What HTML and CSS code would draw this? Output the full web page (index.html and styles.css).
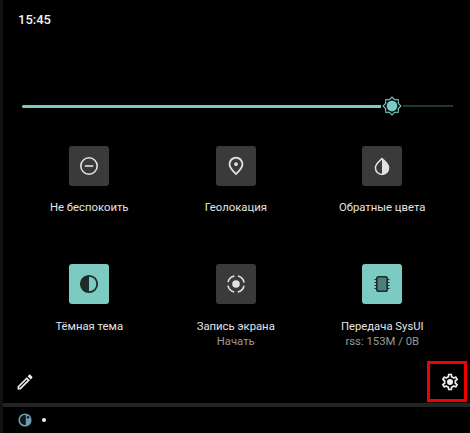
FILE: index.html
```html
<!DOCTYPE html>
<html lang="ru">
<head>
<meta charset="utf-8">
<title>Быстрые настройки</title>
<link rel="stylesheet" href="styles.css">
</head>
<body>
<main class="screen">
  <section class="panel">
    <header class="status"><span class="time">15:45</span></header>
    <div class="slider">
      <div class="track-on"></div>
      <svg class="thumb" width="22" height="22" viewBox="0 0 22 22">
        <rect x="4.8" y="4.8" width="12.4" height="12.4" class="thumb-star"/>
        <rect x="4.8" y="4.8" width="12.4" height="12.4" class="thumb-star" transform="rotate(45 11 11)"/>
        <rect x="5.4" y="5.4" width="11.2" height="11.2" fill="#000"/>
        <rect x="5.4" y="5.4" width="11.2" height="11.2" fill="#000" transform="rotate(45 11 11)"/>
        <circle cx="11" cy="11" r="5.4" fill="#7ccbc2"/>
      </svg>
      <div class="track-off"></div>
    </div>
    <div class="tiles">
      <div class="tile">
        <div class="tile-icon">
          <svg width="20" height="20" viewBox="0 0 20 20" fill="none" stroke="#e2e2e2" stroke-width="1.6"><circle cx="10" cy="10" r="8.2"/><path d="M5.8 10h8.4"/></svg>
        </div>
        <div class="tile-label">Не беспокоить</div>
      </div>
      <div class="tile">
        <div class="tile-icon">
          <svg width="22" height="22" viewBox="0 0 24 24" fill="#e2e2e2"><path d="M12 12c-1.1 0-2-.9-2-2s.9-2 2-2 2 .9 2 2-.9 2-2 2zm6-1.8C18 6.57 15.35 4 12 4s-6 2.57-6 6.2c0 2.34 1.95 5.44 6 9.14 4.05-3.7 6-6.8 6-9.14zM12 2c4.2 0 8 3.22 8 8.2 0 3.32-2.67 7.25-8 11.8-5.33-4.55-8-8.48-8-11.8C4 5.22 7.8 2 12 2z"/></svg>
        </div>
        <div class="tile-label">Геолокация</div>
      </div>
      <div class="tile">
        <div class="tile-icon">
          <svg width="20" height="20" viewBox="0 0 20 20"><path d="M10 2.6 C6.6 6 3.4 8.2 3.4 11.8 A6.6 6.6 0 0 0 16.6 11.8 C16.6 8.2 13.4 6 10 2.6 Z" fill="none" stroke="#e2e2e2" stroke-width="1.5"/><path d="M10 2.6 C13.4 6 16.6 8.2 16.6 11.8 A6.6 6.6 0 0 1 10 18.4 Z" fill="#e2e2e2"/></svg>
        </div>
        <div class="tile-label">Обратные цвета</div>
      </div>
      <div class="tile">
        <div class="tile-icon tile-icon-on">
          <svg width="20" height="20" viewBox="0 0 20 20"><circle cx="10" cy="10" r="8.2" fill="none" stroke="#1d2b2a" stroke-width="1.8"/><path d="M10 1.8 A8.2 8.2 0 0 0 10 18.2 Z" fill="#1d2b2a"/></svg>
        </div>
        <div class="tile-label tile-label-low">Тёмная тема</div>
      </div>
      <div class="tile">
        <div class="tile-icon">
          <svg width="20" height="20" viewBox="0 0 20 20" fill="none" stroke="#e2e2e2" stroke-width="1.6"><circle cx="10" cy="10" r="8.2" stroke-dasharray="9.2 3.68" stroke-dashoffset="-1.8"/><circle cx="10" cy="10" r="3.8" fill="#e2e2e2" stroke="none"/></svg>
        </div>
        <div class="tile-label tile-label-low">Запись экрана</div>
        <div class="tile-sub">Начать</div>
      </div>
      <div class="tile">
        <div class="tile-icon tile-icon-on">
          <svg width="20" height="20" viewBox="0 0 20 20"><path d="M2.5 5.5h2.5M2.5 8.5h2.5M2.5 11.5h2.5M2.5 14.5h2.5M15 5.5h2.5M15 8.5h2.5M15 11.5h2.5M15 14.5h2.5" stroke="#1d2b2a" stroke-width="1.2"/><rect x="4.8" y="2.8" width="10.4" height="14.4" rx="1.8" fill="#4f7f7b" stroke="#1d2b2a" stroke-width="1.6"/></svg>
        </div>
        <div class="tile-label tile-label-low">Передача SysUI</div>
        <div class="tile-sub">rss: 153M / 0B</div>
      </div>
    </div>
    <footer class="actions">
      <svg width="20" height="20" viewBox="0 0 24 24" fill="#efefef"><path d="M14.06 9.02l.92.92L5.92 19H5v-.92l9.06-9.06M17.66 3c-.25 0-.51.1-.7.29l-1.83 1.83 3.75 3.75 1.83-1.83c.39-.39.39-1.02 0-1.41l-2.34-2.34c-.2-.2-.45-.29-.71-.29zm-3.6 3.19L3 17.25V21h3.75L17.81 9.94l-3.75-3.75z"/></svg>
      <span class="settings">
        <svg width="20" height="20" viewBox="0 0 24 24" fill="#efefef"><path d="M19.43 12.98c.04-.32.07-.64.07-.98 0-.34-.03-.66-.07-.98l2.11-1.65c.19-.15.24-.42.12-.64l-2-3.46c-.09-.16-.26-.25-.44-.25-.06 0-.12.01-.17.03l-2.49 1c-.52-.4-1.08-.73-1.69-.98l-.38-2.65C14.46 2.18 14.25 2 14 2h-4c-.25 0-.46.18-.49.42l-.38 2.65c-.61.25-1.17.59-1.69.98l-2.49-1c-.06-.02-.12-.03-.18-.03-.17 0-.34.09-.43.25l-2 3.46c-.13.22-.07.49.12.64l2.11 1.65c-.04.32-.07.65-.07.98 0 .33.03.66.07.98l-2.11 1.65c-.19.15-.24.42-.12.64l2 3.46c.09.16.26.25.44.25.06 0 .12-.01.17-.03l2.49-1c.52.4 1.08.73 1.69.98l.38 2.65c.03.24.24.42.49.42h4c.25 0 .46-.18.49-.42l.38-2.65c.61-.25 1.17-.59 1.69-.98l2.49 1c.06.02.12.03.18.03.17 0 .34-.09.43-.25l2-3.46c.12-.22.07-.49-.12-.64l-2.11-1.65zm-1.98-1.71c.04.31.05.52.05.73 0 .21-.02.43-.05.73l-.14 1.13.89.7 1.08.84-.7 1.21-1.27-.51-1.04-.42-.9.68c-.43.32-.84.56-1.25.73l-1.06.43-.16 1.13-.2 1.35h-1.4l-.19-1.35-.16-1.13-1.06-.43c-.43-.18-.83-.41-1.23-.71l-.91-.7-1.06.43-1.27.51-.7-1.21 1.08-.84.89-.7-.14-1.13c-.03-.31-.05-.54-.05-.74s.02-.43.05-.73l.14-1.13-.89-.7-1.08-.84.7-1.21 1.27.51 1.04.42.9-.68c.43-.32.84-.56 1.25-.73l1.06-.43.16-1.13.2-1.35h1.39l.19 1.35.16 1.13 1.06.43c.43.18.83.41 1.23.71l.91.7 1.06-.43 1.27-.51.7 1.21-1.07.85-.89.7.14 1.13z"/><circle cx="12" cy="12" r="3.6"/></svg>
      </span>
    </footer>
  </section>
  <div class="divider"></div>
  <section class="notif">
    <svg width="14" height="14" viewBox="0 0 14 14"><circle cx="7" cy="7" r="6.6" fill="#6c9db0"/><path d="M7.8 2.2 A4.9 4.9 0 1 0 7.8 11.8 Z" fill="#12181b"/><circle cx="10" cy="4.2" r="1.2" fill="#12181b"/></svg>
    <span class="dot"></span>
  </section>
</main>
</body>
</html>
```
FILE: styles.css
```css
* { box-sizing: border-box; }
html, body { margin: 0; padding: 0; background: #000; }
body { width: 470px; height: 433px; overflow: hidden; font-family: Roboto, "Noto Sans", sans-serif; }

.screen {
  position: relative;
  width: 470px;
  height: 433px;
  display: flex;
  flex-direction: column;
  background: #000;
  border-left: 3px solid #121214;
}

.panel { height: 403px; flex: none; display: flex; flex-direction: column; }

.status { flex: none; height: 38px; padding-left: 15px; display: flex; align-items: center; }
.time { font-size: 13px; font-weight: 500; color: #f2f2f2; }

.slider {
  flex: none;
  height: 22px;
  margin-top: 57px;
  padding-left: 19px;
  width: 450px;
  display: flex;
  align-items: center;
}
.track-on { width: 359px; height: 3px; background: #7ccbc2; border-radius: 2px 0 0 2px; }
.thumb { flex: none; }
.track-off { flex: 1; height: 2px; background: #1f3834; }
.thumb-star { fill: #000; stroke: #7ccbc2; stroke-width: 1.3; }

.tiles {
  flex: none;
  margin-top: 29px;
  padding-left: 13px;
  display: grid;
  grid-template-columns: repeat(3, 146.5px);
  grid-template-rows: 118px auto;
}
.tile { display: flex; flex-direction: column; align-items: center; }
.tile-icon {
  width: 40px;
  height: 40px;
  border-radius: 3px;
  background: #3a3a3a;
  display: flex;
  align-items: center;
  justify-content: center;
}
.tile-icon-on { background: #7ccbc2; }
.tile-label { margin-top: 14px; font-size: 11.3px; line-height: 15px; color: #e4e4e4; white-space: nowrap; }
.tile-label-low { margin-top: 15px; }
.tile-sub { font-size: 11.3px; line-height: 15px; color: #9a9a9a; white-space: nowrap; }

.actions {
  flex: none;
  margin-top: auto;
  height: 42px;
  padding: 0 10px 0 12px;
  display: flex;
  align-items: center;
  justify-content: space-between;
}
.settings {
  position: absolute;
  left: 424px;
  top: 361px;
  width: 40px;
  height: 41px;
  border: 3px solid #f00000;
  padding-left: 6px;
  display: flex;
  align-items: center;
  justify-content: center;
}

.divider { flex: none; height: 4px; background: #222324; }

.notif {
  flex: 1;
  padding-left: 15px;
  display: flex;
  align-items: center;
  gap: 10px;
}
.dot { width: 4px; height: 4px; border-radius: 50%; background: #efefef; }
```
